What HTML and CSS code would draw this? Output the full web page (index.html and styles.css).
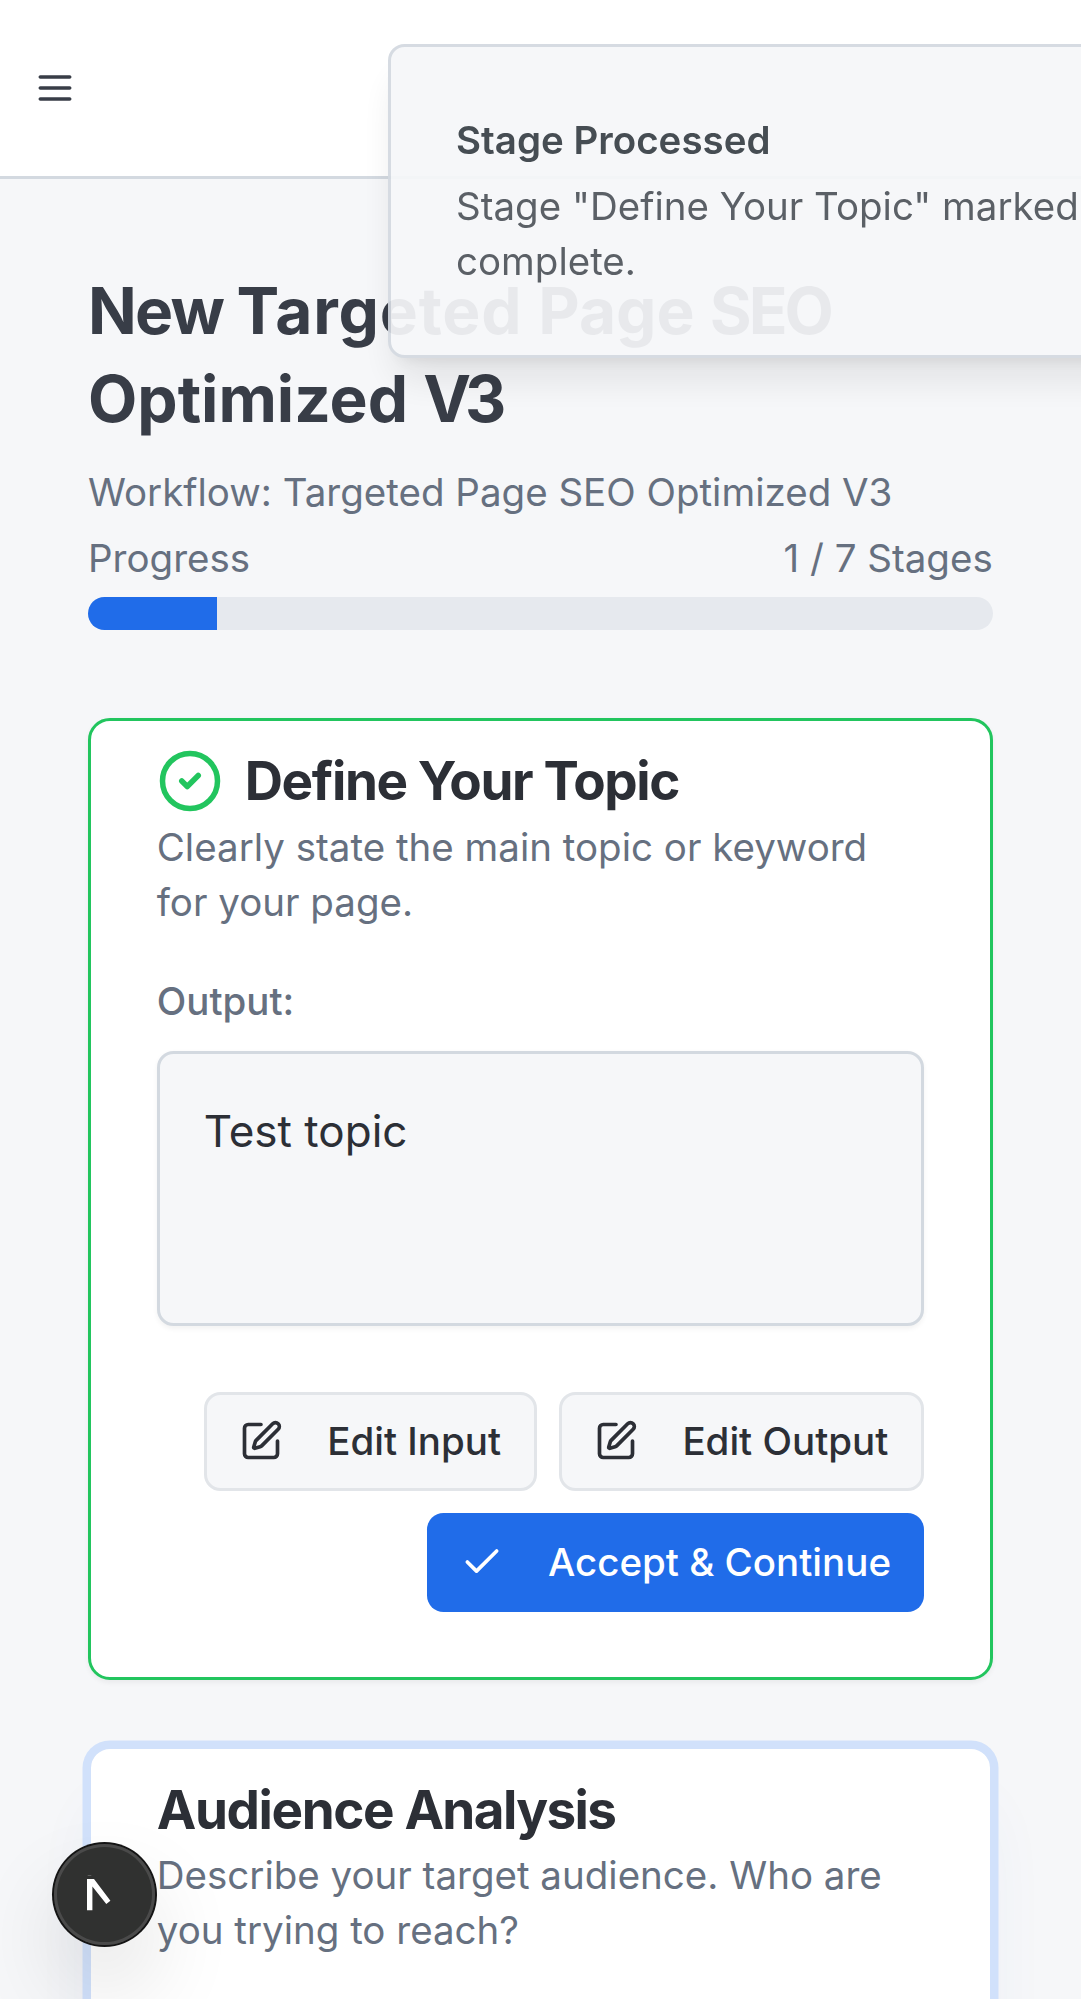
FILE: index.html
```html
<!DOCTYPE html>
<html lang="en">
<head>
<meta charset="utf-8">
<meta name="viewport" content="width=device-width, initial-scale=1">
<title>Targeted Page SEO Optimized V3</title>
<link rel="stylesheet" href="styles.css">
</head>
<body>
<header class="topbar">
  <button class="menu-button" aria-label="Open menu">
    <svg class="icon" viewBox="0 0 24 24"><path d="M4 6h16M4 12h16M4 18h16"/></svg>
  </button>
</header>

<main class="page">
  <h1 class="page-title"><span class="tight">New </span><span class="loose">Targeted </span>Page <span class="tighter">SEO</span><br>Optimized <span class="tightest">V3</span></h1>
  <p class="workflow">Workflow: Targeted Page SEO Optimized V3</p>
  <div class="progress-head"><span>Progress</span><span>1 / 7 Stages</span></div>
  <div class="progress"><div class="progress-fill" style="width:14.2857%"></div></div>

  <section class="card card-done">
    <div class="card-head">
      <svg class="icon icon-status" viewBox="0 0 24 24"><circle cx="12" cy="12" r="10"/><path d="m9 12 2 2 4-4"/></svg>
      <h2 class="card-title">Define Your Topic</h2>
    </div>
    <p class="card-text">Clearly state the main topic or keyword<br>for your page.</p>
    <p class="label">Output:</p>
    <div class="output">Test topic</div>
    <div class="actions">
      <button class="btn btn-outline">
        <svg class="icon" viewBox="0 0 24 24"><path d="M12 3H5a2 2 0 0 0-2 2v14a2 2 0 0 0 2 2h14a2 2 0 0 0 2-2v-7"/><path d="M18.375 2.625a1 1 0 0 1 3 3l-9.013 9.014a2 2 0 0 1-.853.505l-2.873.84a.5.5 0 0 1-.62-.62l.84-2.873a2 2 0 0 1 .506-.852z"/></svg>
        Edit Input
      </button>
      <button class="btn btn-outline">
        <svg class="icon" viewBox="0 0 24 24"><path d="M12 3H5a2 2 0 0 0-2 2v14a2 2 0 0 0 2 2h14a2 2 0 0 0 2-2v-7"/><path d="M18.375 2.625a1 1 0 0 1 3 3l-9.013 9.014a2 2 0 0 1-.853.505l-2.873.84a.5.5 0 0 1-.62-.62l.84-2.873a2 2 0 0 1 .506-.852z"/></svg>
        Edit Output
      </button>
      <button class="btn btn-primary">
        <svg class="icon" viewBox="0 0 24 24"><path d="M20 6 9 17l-5-5"/></svg>
        Accept &amp; Continue
      </button>
    </div>
  </section>

  <section class="card card-active">
    <div class="card-head"><h2 class="card-title">Audience <span class="snug">Analysis</span></h2></div>
    <p class="card-text">Describe your target audience. Who are<br>you trying to reach?</p>
  </section>
</main>

<div class="toast" role="status">
  <p class="toast-title">Stage Processed</p>
  <p class="toast-text">Stage "Define Your Topic" marked<br>complete.</p>
</div>

<div class="dev-badge">
  <svg class="dev-mark" viewBox="0 0 24 32"><path d="M0 0h7l16.4 21.7-4.1 3.3L5.4 7.5v23.8H0z"/><path class="dev-tick" d="M.7-4h3.6v1H.7z"/></svg>
</div>
</body>
</html>
```
FILE: styles.css
```css
/* 1rem is 16 layout pixels on a 2.75x display */
html { font-size: 44px; overflow: hidden; background: #f6f7f9; }
* { box-sizing: border-box; }
body {
  margin: 0;
  width: 24.5625rem;
  height: 1999px;
  overflow: hidden;
  background: #f6f7f9;
  color: #2c2f36;
  font-family: Inter, "Liberation Sans", sans-serif;
  font-size: 0.875rem;
  line-height: 1.25rem;
}
h1, h2, p { margin: 0; }
button { font: inherit; color: inherit; }
.icon {
  width: 1rem;
  height: 1rem;
  flex: none;
  fill: none;
  stroke: currentColor;
  stroke-width: 2;
  stroke-linecap: round;
  stroke-linejoin: round;
}

.topbar {
  display: flex;
  align-items: center;
  width: 1081px;
  height: 4.0625rem;
  padding: 0 0.75rem;
  background: #fff;
  border-bottom: 3px solid #d3d9e0;
}
.menu-button {
  display: flex;
  padding: 0;
  border: 0;
  background: none;
  color: #383d47;
}

.page { padding: 2rem; }
.page-title {
  color: #383d47;
  font-size: 64px;
  font-weight: 700;
  line-height: 2rem;
  white-space: nowrap;
}
.tight { letter-spacing: -1.8px; }
.snug { letter-spacing: -1.6px; }
.loose { letter-spacing: 0.8px; }
.tighter { letter-spacing: -3px; }
.tightest { letter-spacing: -6px; }
.workflow { margin-top: 0.5rem; color: #667080; }
.progress-head {
  display: flex;
  justify-content: space-between;
  margin-top: 0.25rem;
  color: #667080;
}
.progress {
  height: 0.75rem;
  margin-top: 0.25rem;
  overflow: hidden;
  border-radius: 1rem;
  background: #e6e9ee;
}
.progress-fill { height: 100%; background: #206ce9; }

.card {
  padding: 27.5px 65.75px 65.5px;
  border: 3px solid transparent;
  border-radius: 0.5rem;
  background: #fff;
}
.card-done {
  margin-top: 2rem;
  border-color: #22c55e;
  box-shadow: 0 0.0625rem 0.125rem rgba(0, 0, 0, 0.05);
}
.card-active {
  height: 16rem;
  margin-top: 1.5rem;
  border-color: #d1e1fb;
  background-clip: padding-box;
  box-shadow: 0 0 0 5.5px #d1e1fb, 0 1.25rem 1.6rem -0.3rem rgba(60, 80, 180, 0.07);
}
.card-head { display: flex; align-items: center; gap: 0.5rem; height: 1.5rem; }
.icon-status { width: 1.5rem; height: 1.5rem; color: #22c55e; }
.card-title {
  font-size: 53px;
  font-weight: 700;
  line-height: 1.5rem;
  letter-spacing: -1.4px;
  white-space: nowrap;
}
.card-text { margin-top: 0.125rem; color: #667080; white-space: nowrap; }
.label { margin-top: 1rem; color: #667080; font-weight: 500; }
.output {
  height: 6.25rem;
  margin-top: 0.5rem;
  padding: 1rem;
  border: 3px solid #d3d9e0;
  border-radius: 0.375rem;
  background: #f6f7f9;
  box-shadow: 0 0.0625rem 0.125rem rgba(0, 0, 0, 0.05);
  font-size: 1rem;
  line-height: 1.5rem;
}
.actions {
  display: flex;
  flex-wrap: wrap;
  justify-content: flex-end;
  gap: 0.5rem;
  margin-top: 1.5rem;
}
.btn {
  display: flex;
  align-items: center;
  gap: 1rem;
  height: 2.25rem;
  padding: 0 0.75rem;
  border: 0;
  border-radius: 0.375rem;
  font-weight: 500;
  white-space: nowrap;
}
.btn-outline {
  padding: 0 32.7px;
  border: 3px solid #e2e5e9;
  background: #f6f7f9;
}
.btn-primary { background: #206ce9; color: #fff; }

/* notification sliding in from the right edge */
.toast {
  position: fixed;
  top: 1rem;
  left: 388px;
  width: 22.5625rem;
  padding: 65.75px 65px;
  border: 3px solid #d3d9e0;
  border-radius: 0.375rem;
  background: #f6f7f9;
  box-shadow: 0 0.625rem 0.9375rem -0.1875rem rgba(0, 0, 0, 0.1), 0 0.25rem 0.375rem -0.25rem rgba(0, 0, 0, 0.1);
  opacity: 0.93;
  white-space: nowrap;
}
.toast-title { font-weight: 600; color: #394046; }
.toast-text { margin-top: 0.25rem; opacity: 0.9; color: #3d434b; }

.dev-badge {
  position: fixed;
  top: 1844px;
  left: 54px;
  width: 101px;
  height: 101px;
  padding: 35px 0 0 33px;
  border-radius: 50%;
  background: #303130;
  box-shadow: 0 0 0 2px #141414, inset 0 0 0 3px #4a4a4a, 0 44px 88px rgba(0, 0, 0, 0.12);
}
.dev-mark { display: block; width: 24px; height: 32px; overflow: visible; fill: #fff; }
.dev-tick { fill: #5c5c5c; }
```
